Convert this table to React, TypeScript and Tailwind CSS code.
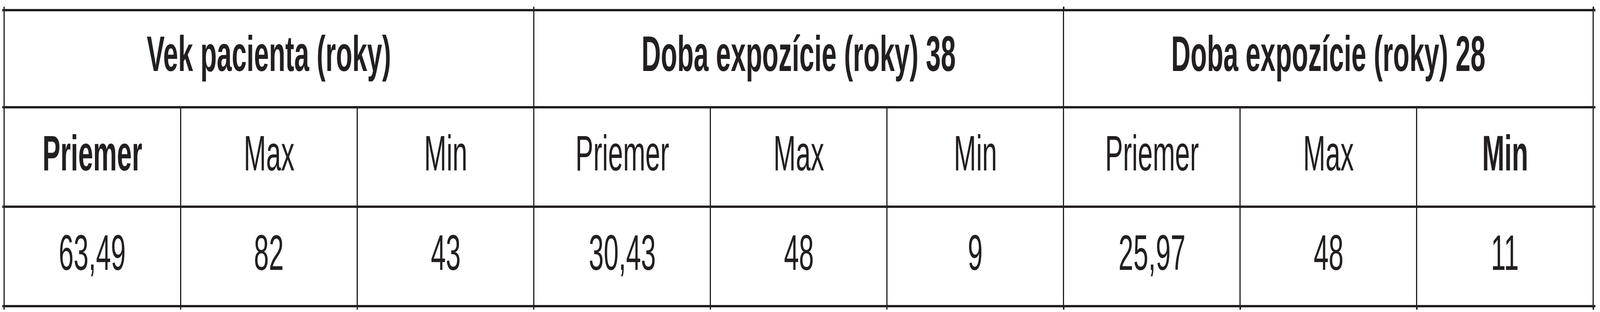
import React, { useEffect, useState } from "react";

// The figure was laid out for a 7644px wide frame; the page may get a
// narrower window, so the table is fluid across and the lettering is
// squeezed sideways by the same ratio to keep its proportions.
const REF_WIDTH = 7644;

type Cell = { text: string; bold?: boolean };

const groups = [
  "Vek pacienta (roky)",
  "Doba expozície (roky) 38",
  "Doba expozície (roky) 28",
];

const labels: Cell[] = [
  { text: "Priemer", bold: true },
  { text: "Max" },
  { text: "Min" },
  { text: "Priemer" },
  { text: "Max" },
  { text: "Min" },
  { text: "Priemer" },
  { text: "Max" },
  { text: "Min", bold: true },
];

const values = ["63,49", "82", "43", "30,43", "48", "9", "25,97", "48", "11"];

// overhangs where the ruling lines run past the edge of the table
const leftTicks =
  "before:absolute before:content-[''] before:-left-[0.0785vw] before:-top-[12px] before:w-[0.0785vw] before:h-[6px] before:bg-[#231f20] before:shadow-[-0.0785vw_6px_0_#231f20,-0.0785vw_255px_0_#231f20,-0.0785vw_510px_0_#231f20,-0.0785vw_765px_0_#231f20,0_771px_0_#231f20]";
const rightTicks =
  "after:absolute after:content-[''] after:-right-[0.0785vw] after:-top-[12px] after:w-[0.0785vw] after:h-[6px] after:bg-[#231f20] after:shadow-[0.0785vw_6px_0_#231f20,0.0785vw_255px_0_#231f20,0.0785vw_510px_0_#231f20,0.0785vw_765px_0_#231f20]";
const dividerTick =
  "after:absolute after:content-[''] after:-right-[0.0785vw] after:-top-[12px] after:w-[0.0785vw] after:h-[6px] after:bg-[#231f20]";
const bottomTick =
  "after:absolute after:content-[''] after:-right-[0.0785vw] after:-bottom-[12px] after:w-[0.0785vw] after:h-[6px] after:bg-[#231f20]";

const useStretch = () => {
  const [sx, setSx] = useState(() => Math.min(1, window.innerWidth / REF_WIDTH));
  useEffect(() => {
    const onResize = () => setSx(Math.min(1, window.innerWidth / REF_WIDTH));
    window.addEventListener("resize", onResize);
    return () => window.removeEventListener("resize", onResize);
  }, []);
  return sx;
};

const Text = ({ children, sx }: { children: React.ReactNode; sx: number }) => (
  <span className="inline-block whitespace-nowrap" style={{ transform: `scaleX(${sx})` }}>
    {children}
  </span>
);

const App = () => {
  const sx = useStretch();

  return (
    <div className="w-full h-[800px] overflow-hidden bg-white font-['Liberation_Sans',Arial,sans-serif] text-[128px] leading-none text-[#231f20]">
      <div className="ml-[0.2224vw] mt-[23px] grid w-[99.398vw] grid-cols-9 border-l-[0.0785vw] border-t-[6px] border-[#231f20]">
        {groups.map((g, i) => (
          <div
            key={g}
            className={`relative col-span-3 flex h-[249px] justify-center border-r-[0.0785vw] border-b-[6px] border-[#231f20] pt-[45px] font-bold ${
              i === 0 ? leftTicks : ""
            } ${i === groups.length - 1 ? rightTicks : dividerTick}`}
          >
            <Text sx={sx}>{g}</Text>
          </div>
        ))}

        {labels.map((c, i) => (
          <div
            key={`l${i}`}
            className={`flex h-[255px] justify-center border-r-[0.0785vw] border-b-[6px] border-[#231f20] pt-[51px] ${
              c.bold ? "font-bold" : "font-normal"
            }`}
          >
            <Text sx={sx}>{c.text}</Text>
          </div>
        ))}

        {values.map((v, i) => (
          <div
            key={`v${i}`}
            className={`relative flex h-[255px] justify-center border-r-[0.0785vw] border-b-[6px] border-[#231f20] pt-[51px] ${bottomTick}`}
          >
            <Text sx={sx}>{v}</Text>
          </div>
        ))}
      </div>
    </div>
  );
};

export default App;
